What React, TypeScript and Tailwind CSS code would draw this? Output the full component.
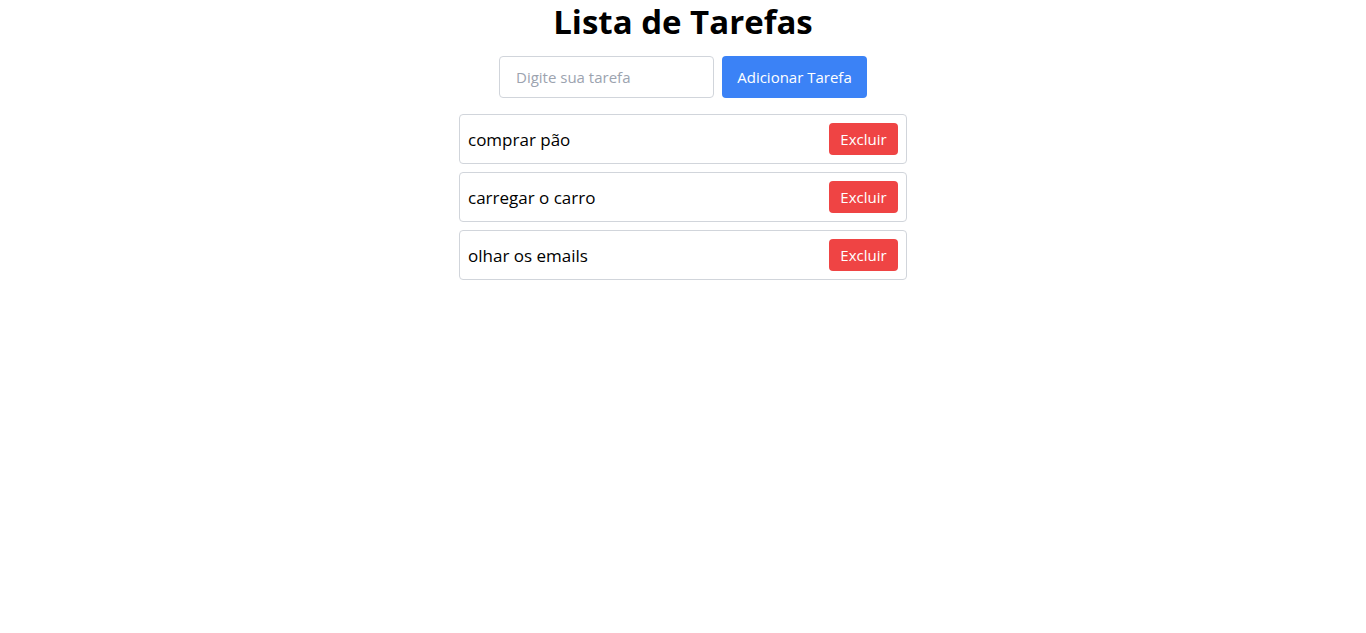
import { useState } from 'react';

/* ── Tarefas ───────────────────────────────────────────────── */

const initialTasks = ['comprar pão', 'carregar o carro', 'olhar os emails'];

export default function App() {
  const [tasks, setTasks] = useState<string[]>(initialTasks);
  const [text, setText] = useState('');

  const addTask = () => {
    if (!text.trim()) return;
    setTasks([...tasks, text.trim()]);
    setText('');
  };

  const removeTask = (idx: number) => {
    setTasks(tasks.filter((_, i) => i !== idx));
  };

  return (
    <div className="flex min-h-screen flex-col items-center bg-white font-['Open_Sans',sans-serif] text-black">
      {/* Title */}
      <h1 className="mt-[2px] text-[33px] font-bold leading-[40px]">Lista de Tarefas</h1>

      {/* Input row */}
      <div className="mt-[14px] flex gap-2">
        <input
          value={text}
          onChange={(e) => setText(e.target.value)}
          placeholder="Digite sua tarefa"
          className="h-[42px] w-[215px] rounded border border-[#d1d5db] px-4 text-[15px] outline-none placeholder:text-[#9ca3af]"
        />
        <button
          onClick={addTask}
          className="h-[42px] w-[145px] rounded bg-[#3b82f6] text-[15px] text-white"
        >
          Adicionar Tarefa
        </button>
      </div>

      {/* List */}
      <ul className="mt-4 flex w-[448px] flex-col gap-2">
        {tasks.map((task, i) => (
          <li
            key={i}
            className="flex h-[50px] items-center justify-between rounded border border-[#d1d5db] px-2"
          >
            <span className="pt-[2px] text-[17px]">{task}</span>
            <button
              onClick={() => removeTask(i)}
              className="h-8 w-[69px] rounded bg-[#ef4444] text-[15px] text-white"
            >
              Excluir
            </button>
          </li>
        ))}
      </ul>
    </div>
  );
}
